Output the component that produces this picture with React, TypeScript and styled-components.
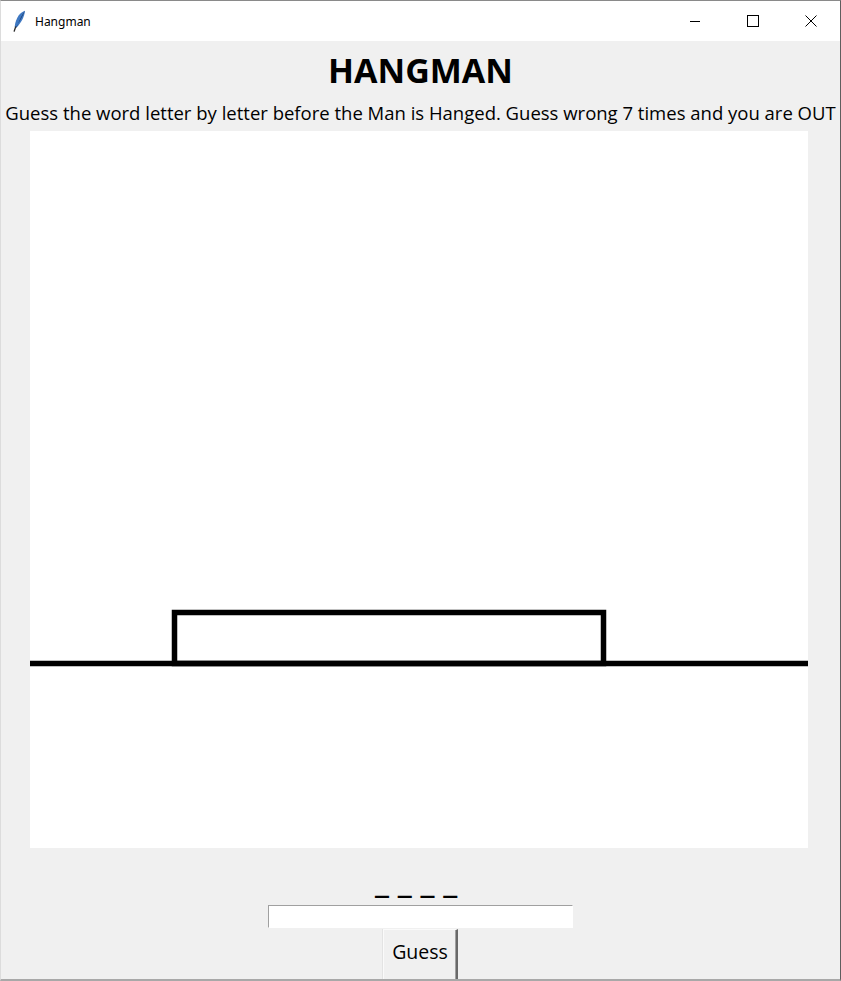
import React from 'react';
import styled, { createGlobalStyle } from 'styled-components';

const Global = createGlobalStyle`
  html, body {
    margin: 0;
    padding: 0;
    background: #ffffff;
  }
  body {
    font-family: "Open Sans", "Noto Sans", sans-serif;
  }
`;

const Window = styled.div`
  width: 841px;
  height: 981px;
  box-sizing: border-box;
  border-top: 1px solid #8a8a8a;
  border-left: 1px solid #dcdcdc;
  border-right: 1px solid #5e5e5e;
  border-bottom: 2px solid #a8a8a8;
  display: flex;
  flex-direction: column;
  overflow: hidden;
  background: #f0f0f0;
`;

const TitleBar = styled.div`
  height: 40px;
  flex: none;
  background: #ffffff;
  display: flex;
  align-items: center;
`;

const AppIcon = styled.svg`
  width: 14px;
  height: 22px;
  margin-left: 11px;
  margin-right: 9px;
`;

const WindowTitle = styled.span`
  font-family: "Noto Sans", "Open Sans", sans-serif;
  font-size: 12px;
  color: #000;
  flex: 1;
`;

const Control = styled.div`
  width: 58px;
  height: 40px;
  display: flex;
  align-items: center;
  justify-content: center;
`;

const Content = styled.div`
  flex: 1;
  display: flex;
  flex-direction: column;
  align-items: center;
`;

const Heading = styled.h1`
  margin: 6px 0 0;
  font-size: 34px;
  line-height: 46px;
  font-weight: 700;
  color: #000;
`;

const Subtitle = styled.p`
  margin: 8px 0 0;
  font-size: 18.5px;
  line-height: 23px;
  color: #000;
  white-space: nowrap;
`;

const Canvas = styled.div`
  align-self: flex-start;
  margin: 7px 0 0 29px;
  width: 778px;
  height: 717px;
  background: #ffffff;
`;

const WordLabel = styled.div`
  margin-top: 13px;
  font-size: 34px;
  line-height: 38px;
  font-weight: 700;
  color: #000;
  white-space: pre;
`;

const Entry = styled.input`
  margin-top: 6px;
  width: 305px;
  height: 23px;
  box-sizing: border-box;
  border: 1px solid #ffffff;
  border-top-color: #a0a0a0;
  border-left-color: #a0a0a0;
  background: #fff;
  outline: none;
  padding: 0 3px;
  font-family: inherit;
  font-size: 14px;
`;

const GuessButton = styled.button`
  margin-top: 1px;
  width: 75px;
  height: 54px;
  flex: none;
  box-sizing: border-box;
  padding: 0 0 8px;
  background: #f0f0f0;
  border-style: solid;
  border-width: 1px 2px 2px 1px;
  border-color: #fafafa #696969 #696969 #fafafa;
  box-shadow: inset -1px -1px 0 #a0a0a0, -1px 0 0 #e3e3e3;
  font-family: "Open Sans", "Noto Sans", sans-serif;
  font-size: 19.5px;
  color: #000;
  display: flex;
  align-items: center;
  justify-content: center;
`;

export default function App() {
  return (
    <>
      <Global />
      <Window>
        <TitleBar>
          <AppIcon viewBox="0 0 14 22">
            <path d="M13 0.8 C8.5 2 4 7 2.6 16.8 L4.6 17.6 C9 13 12.5 7 13 0.8 Z" fill="#3e78c2" />
            <path d="M13 0.8 C10.5 4 7.5 9.5 4.6 17.6 L4 17.3 C8 11 11 5 13 0.8 Z" fill="#1d3d70" />
            <path d="M3.6 17 L2.2 21.2" stroke="#2a2a2a" strokeWidth="1.3" strokeLinecap="round" />
          </AppIcon>
          <WindowTitle>Hangman</WindowTitle>
          <Control>
            <svg width="12" height="12" viewBox="0 0 12 12">
              <line x1="1" y1="6.5" x2="11" y2="6.5" stroke="#000" strokeWidth="1" />
            </svg>
          </Control>
          <Control>
            <svg width="12" height="12" viewBox="0 0 12 12">
              <rect x="0.5" y="0.5" width="11" height="11" stroke="#000" strokeWidth="1" fill="none" />
            </svg>
          </Control>
          <Control>
            <svg width="12" height="12" viewBox="0 0 12 12">
              <path d="M0.5 0.5 L11.5 11.5 M11.5 0.5 L0.5 11.5" stroke="#000" strokeWidth="1" />
            </svg>
          </Control>
        </TitleBar>
        <Content>
          <Heading>HANGMAN</Heading>
          <Subtitle>
            Guess the word letter by letter before the Man is Hanged. Guess wrong 7 times and you are OUT
          </Subtitle>
          <Canvas>
            <svg width="778" height="717" viewBox="0 0 778 717">
              <rect x="144.5" y="481.5" width="429" height="51" fill="none" stroke="#000" strokeWidth="5.5" />
              <line x1="0" y1="532.5" x2="778" y2="532.5" stroke="#000" strokeWidth="5.5" />
            </svg>
          </Canvas>
          <WordLabel>{'_ _ _ _ '}</WordLabel>
          <Entry type="text" />
          <GuessButton>Guess</GuessButton>
        </Content>
      </Window>
    </>
  );
}
